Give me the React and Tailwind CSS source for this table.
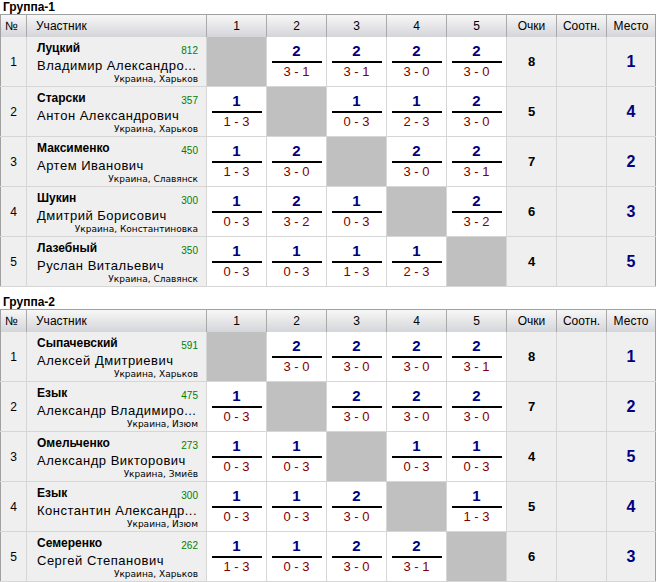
import React from "react";

const groups = [
  {
    title: "Группа-1",
    rows: [
      { n: 1, s: "Луцкий", f: "Владимир Александро...", c: "Украина, Харьков", r: 812, m: [null, [2, "3 - 1"], [2, "3 - 1"], [2, "3 - 0"], [2, "3 - 0"]], p: 8, pl: 1 },
      { n: 2, s: "Старски", f: "Антон Александрович", c: "Украина, Харьков", r: 357, m: [[1, "1 - 3"], null, [1, "0 - 3"], [1, "2 - 3"], [2, "3 - 0"]], p: 5, pl: 4 },
      { n: 3, s: "Максименко", f: "Артем Иванович", c: "Украина, Славянск", r: 450, m: [[1, "1 - 3"], [2, "3 - 0"], null, [2, "3 - 0"], [2, "3 - 1"]], p: 7, pl: 2 },
      { n: 4, s: "Шукин", f: "Дмитрий Борисович", c: "Украина, Константиновка", r: 300, m: [[1, "0 - 3"], [2, "3 - 2"], [1, "0 - 3"], null, [2, "3 - 2"]], p: 6, pl: 3 },
      { n: 5, s: "Лазебный", f: "Руслан Витальевич", c: "Украина, Славянск", r: 350, m: [[1, "0 - 3"], [1, "0 - 3"], [1, "1 - 3"], [1, "2 - 3"], null], p: 4, pl: 5 },
    ],
  },
  {
    title: "Группа-2",
    rows: [
      { n: 1, s: "Сыпачевский", f: "Алексей Дмитриевич", c: "Украина, Харьков", r: 591, m: [null, [2, "3 - 0"], [2, "3 - 0"], [2, "3 - 0"], [2, "3 - 1"]], p: 8, pl: 1 },
      { n: 2, s: "Езык", f: "Александр Владимиро...", c: "Украина, Изюм", r: 475, m: [[1, "0 - 3"], null, [2, "3 - 0"], [2, "3 - 0"], [2, "3 - 0"]], p: 7, pl: 2 },
      { n: 3, s: "Омельченко", f: "Александр Викторович", c: "Украина, Змиёв", r: 273, m: [[1, "0 - 3"], [1, "0 - 3"], null, [1, "0 - 3"], [1, "0 - 3"]], p: 4, pl: 5 },
      { n: 4, s: "Езык", f: "Константин Александр...", c: "Украина, Изюм", r: 300, m: [[1, "0 - 3"], [1, "0 - 3"], [2, "3 - 0"], null, [1, "1 - 3"]], p: 5, pl: 4 },
      { n: 5, s: "Семеренко", f: "Сергей Степанович", c: "Украина, Харьков", r: 262, m: [[1, "1 - 3"], [1, "0 - 3"], [2, "3 - 0"], [2, "3 - 1"], null], p: 6, pl: 3 },
    ],
  },
];

const hd = "h-[22px] p-0 border-r border-[#a9a9a9] font-normal text-[12px] text-black align-middle";

function Group({ g, first }) {
  return (
    <div className={first ? "" : "mt-[8px]"}>
      <div className="h-[14px] pl-[3px] text-[12px] leading-[14px] font-bold text-black">{g.title}</div>
      <table className="w-[655px] table-fixed border-collapse border border-[#a0a0a0]">
        <colgroup>
          <col className="w-[26px]" />
          <col className="w-[180px]" />
          <col className="w-[60px]" />
          <col className="w-[60px]" />
          <col className="w-[60px]" />
          <col className="w-[60px]" />
          <col className="w-[60px]" />
          <col className="w-[50px]" />
          <col className="w-[50px]" />
          <col className="w-[49px]" />
        </colgroup>
        <thead>
          <tr className="bg-gradient-to-b from-[#f7f7f7] to-[#d6d7db] border-b border-[#8c8c8c]">
            <th className={hd + " text-left pl-[4px]"}>№</th>
            <th className={hd + " text-left pl-[9px]"}>Участник</th>
            {[1, 2, 3, 4, 5].map((i) => (
              <th key={i} className={hd + " text-center"}>{i}</th>
            ))}
            <th className={hd + " text-center"}>Очки</th>
            <th className={hd + " text-center"}>Соотн.</th>
            <th className={hd + " text-center border-r-0"}>Место</th>
          </tr>
        </thead>
        <tbody>
          {g.rows.map((r) => (
            <tr key={r.n} className="h-[50px]">
              <td className="p-0 bg-[#efefef] border border-[#d6d6d6] border-l-[#a0a0a0] text-center text-[12px] text-black align-middle">{r.n}</td>
              <td className="p-0 bg-[#efefef] border border-[#d6d6d6] align-top">
                <div className="h-[48px] pl-[10px] pr-[8px] pt-[3px]">
                  <div className="flex justify-between h-[16px]">
                    <span className="text-[12px] leading-[16px] font-bold text-black">{r.s}</span>
                    <span className="text-[10px] leading-[16px] mt-[3px] text-[#008000]">{r.r}</span>
                  </div>
                  <div className="mt-[2px] text-[13px] leading-[16px] tracking-[0.5px] text-black whitespace-nowrap">{r.f}</div>
                  <div className="text-right text-[9px] leading-[11px] text-black whitespace-nowrap" style={{ fontFamily: '"DejaVu Sans", sans-serif' }}>{r.c}</div>
                </div>
              </td>
              {r.m.map((m, i) =>
                m ? (
                  <td key={i} className="p-0 bg-white border border-[#d6d6d6] align-top">
                    <div className="flex flex-col items-center pt-[6px]">
                      <div className="text-[15px] leading-[15px] font-bold text-[#000080]">{m[0]}</div>
                      <div className="mt-[3px] w-[50px] h-[2px] bg-black" />
                      <div className="mt-[2px] text-[13px] leading-[13px] text-[#800000] whitespace-pre">{m[1]}</div>
                    </div>
                  </td>
                ) : (
                  <td key={i} className="p-0 bg-[#c0c0c0] border border-[#d6d6d6]" />
                )
              )}
              <td className="p-0 bg-[#efefef] border border-[#d6d6d6] text-center text-[13px] font-bold text-black align-middle">{r.p}</td>
              <td className="p-0 bg-[#efefef] border border-[#d6d6d6]" />
              <td className="p-0 bg-[#efefef] border border-[#d6d6d6] border-r-[#a0a0a0] text-center text-[16px] font-bold text-[#000080] align-middle">{r.pl}</td>
            </tr>
          ))}
        </tbody>
      </table>
    </div>
  );
}

export default function App() {
  return (
    <div className="w-[658px] h-[582px] bg-white" style={{ fontFamily: '"Liberation Sans", Arial, sans-serif' }}>
      {groups.map((g, i) => (
        <Group key={i} g={g} first={i === 0} />
      ))}
    </div>
  );
}
